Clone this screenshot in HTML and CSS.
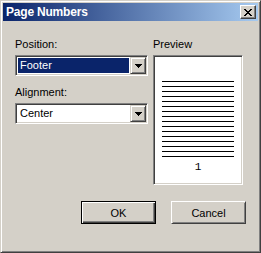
FILE: index.html
```html
<!DOCTYPE html>
<html lang="en">
<head>
  <meta charset="UTF-8" />
  <title>Page Numbers</title>
  <link rel="stylesheet" href="styles.css">
</head>
<body>
  <div class="window">
    <div class="titlebar">
      <span class="title">Page Numbers</span>
      <button class="close" type="button">
        <svg width="8" height="7" viewBox="0 0 8 7" shape-rendering="crispEdges"><path d="M0 0h2v1H0z M6 0h2v1H6z M1 1h2v1H1z M5 1h2v1H5z M2 2h4v1H2z M3 3h2v1H3z M2 4h4v1H2z M1 5h2v1H1z M5 5h2v1H5z M0 6h2v1H0z M6 6h2v1H6z" fill="#000"/></svg>
      </button>
    </div>

    <div class="content">
      <div class="cols">
        <div class="left">
          <label class="label">Position:</label>
          <div class="combo">
            <span class="value selected">Footer</span>
            <span class="drop"><svg width="7" height="4" viewBox="0 0 7 4" shape-rendering="crispEdges"><path d="M0 0h7v1H0z M1 1h5v1H1z M2 2h3v1H2z M3 3h1v1H3z" fill="#000"/></svg></span>
          </div>

          <label class="label second">Alignment:</label>
          <div class="combo">
            <span class="value">Center</span>
            <span class="drop"><svg width="7" height="4" viewBox="0 0 7 4" shape-rendering="crispEdges"><path d="M0 0h7v1H0z M1 1h5v1H1z M2 2h3v1H2z M3 3h1v1H3z" fill="#000"/></svg></span>
          </div>
        </div>

        <div class="right">
          <label class="label">Preview</label>
          <div class="preview">
            <div class="lines">
              <div></div><div></div><div></div><div></div>
              <div></div><div></div><div></div><div></div>
              <div></div><div></div><div></div><div></div>
              <div></div><div></div><div></div><div></div>
            </div>
            <div class="pagenum">1</div>
          </div>
        </div>
      </div>

      <div class="buttons">
        <button class="btn default" type="button">OK</button>
        <button class="btn" type="button">Cancel</button>
      </div>
    </div>
  </div>
</body>
</html>
```

FILE: styles.css
```css
* { box-sizing: border-box; }
body {
  margin: 0;
  background: #d4d0c8;
  font-family: "Liberation Sans", Arial, sans-serif;
  font-size: 11px;
  color: #000;
}
.window {
  width: 261px;
  height: 253px;
  background: #d4d0c8;
  border: 1px solid;
  border-color: #d4d0c8 #404040 #404040 #d4d0c8;
  box-shadow: inset 1px 1px #fff, inset -1px -1px #808080;
  padding: 2px;
}
.titlebar {
  height: 18px;
  background: linear-gradient(to right, #0a246a, #a6caf0);
  display: flex;
  align-items: center;
  justify-content: space-between;
  padding: 0 2px;
}
.title {
  color: #fff;
  font-family: "Liberation Sans", Arial, sans-serif;
  font-weight: bold;
  font-size: 12px;
  letter-spacing: -0.2px;
  padding-left: 1px;
}
.close {
  width: 16px;
  height: 14px;
  padding: 0;
  background: #d4d0c8;
  border: 1px solid;
  border-color: #fff #404040 #404040 #fff;
  box-shadow: inset -1px -1px #808080;
  display: flex;
  align-items: center;
  justify-content: center;
}
.close svg { display: block; margin: 0 0 0 -1px; }

.content {
  padding: 17px 12px 0 12px;
}
.cols {
  display: flex;
  gap: 5px;
}
.left { width: 133px; }
.right { width: 90px; }
.label {
  display: block;
  height: 13px;
  line-height: 13px;
  margin-bottom: 4px;
}
.label.second { margin-top: 10px; }

.combo {
  height: 21px;
  background: #fff;
  border: 1px solid;
  border-color: #808080 #fff #fff #808080;
  box-shadow: inset 1px 1px #404040, inset -1px -1px #d4d0c8;
  padding: 1px;
  display: flex;
}
.value {
  flex: 1;
  height: 15px;
  margin: 1px;
  padding-left: 2px;
  line-height: 15px;
}
.value.selected {
  background: #0a246a;
  color: #fff;
}
.drop {
  width: 16px;
  height: 17px;
  background: #d4d0c8;
  border: 1px solid;
  border-color: #d4d0c8 #404040 #404040 #d4d0c8;
  box-shadow: inset 1px 1px #fff, inset -1px -1px #808080;
  display: flex;
  align-items: center;
  justify-content: center;
}
.drop svg { display: block; }

.preview {
  height: 130px;
  background: #fff;
  border: 1px solid;
  border-color: #808080 #fff #fff #808080;
  box-shadow: inset 1px 1px #404040, inset -1px -1px #d4d0c8;
  padding: 25px 8px 0 8px;
}
.lines div {
  height: 1px;
  background: #000;
  margin-bottom: 4px;
}
.pagenum {
  color: #000;
  font-family: "Liberation Mono", monospace;
  text-align: center;
  line-height: 13px;
}

.buttons {
  display: flex;
  justify-content: flex-end;
  gap: 15px;
  margin-top: 16px;
}
.btn {
  width: 75px;
  height: 23px;
  padding: 0;
  font-family: inherit;
  font-size: 11px;
  color: #000;
  background: #d4d0c8;
  border: 1px solid;
  border-color: #fff #404040 #404040 #fff;
  box-shadow: inset 1px 1px #d4d0c8, inset -1px -1px #808080;
}
.btn.default {
  border-color: #000;
  box-shadow: inset 1px 1px #fff, inset -1px -1px #404040, inset -2px -2px #808080;
}
```
